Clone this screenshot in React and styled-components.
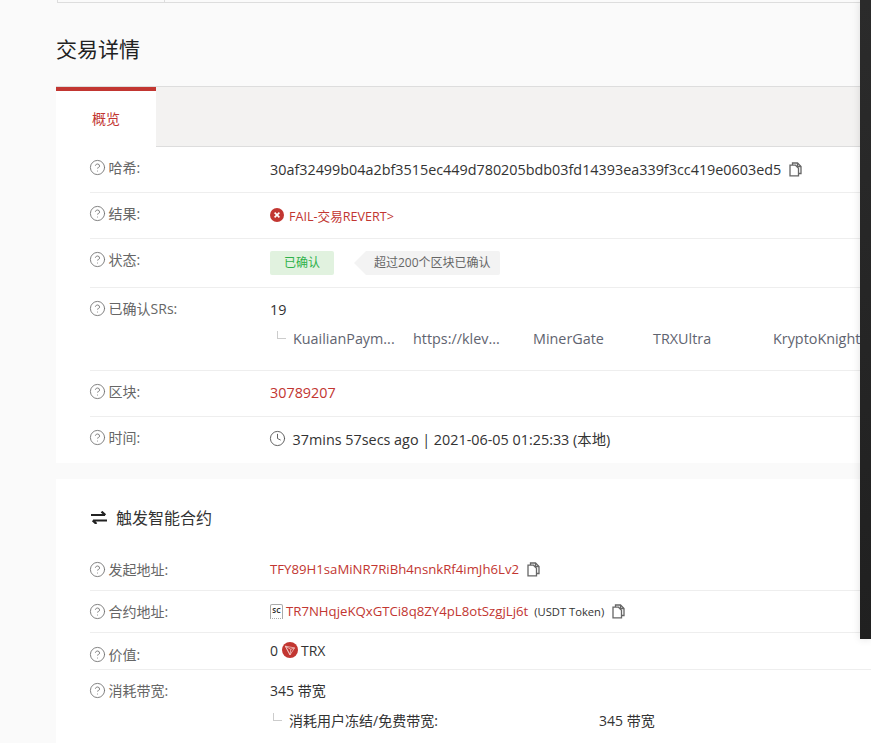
import React from 'react';
import styled, { createGlobalStyle } from 'styled-components';
import { CircleHelp, Clock } from 'lucide-react';

const GlobalStyle = createGlobalStyle`
  html, body {
    margin: 0;
    height: 743px;
    overflow: hidden;
    background: #fafafa;
    font-family: "Open Sans", "Noto Sans CJK SC", sans-serif;
    color: #333;
  }
`;

const Page = styled.div`
  height: 743px;
  overflow: hidden;
  padding-left: 56px;
`;

const ScrollEdge = styled.div`
  position: fixed;
  top: 0;
  right: 0;
  width: 11px;
  height: 639px;
  background: linear-gradient(#2b2b2b, #202020);
  box-shadow: 0 0 8px rgba(0, 0, 0, 0.12);
`;

const TopTable = styled.div`
  height: 2px;
  margin-left: 1px;
  border-bottom: 1px solid #ddd;
  border-left: 1px solid #ddd;
  display: flex;
`;

const TopCell = styled.div`
  width: 106px;
  border-right: 1px solid #ddd;
`;

const Title = styled.h1`
  margin: 0;
  height: 83px;
  padding-top: 6px;
  box-sizing: border-box;
  display: flex;
  align-items: center;
  font-size: 21px;
  font-weight: 400;
  color: #222;
`;

const TabBar = styled.div`
  height: 59px;
  background: #f3f2f1;
  border-top: 1px solid #ddd;
  border-bottom: 1px solid #ddd;
  display: flex;
`;

const Tab = styled.div`
  width: 100px;
  height: 54px;
  padding-bottom: 2px;
  margin-bottom: -1px;
  background: #fff;
  border-top: 4px solid #c23631;
  display: flex;
  align-items: center;
  justify-content: center;
  font-size: 14px;
  color: #c23631;
`;

const Panel = styled.section`
  background: #fff;
  padding-left: 34px;
  margin-bottom: ${p => p.$gap || 0}px;
`;

const Row = styled.div`
  height: ${p => p.$h}px;
  display: flex;
  border-bottom: ${p => (p.$last ? 'none' : '1px solid #eee')};
  box-sizing: border-box;
`;

const Label = styled.div`
  width: 180px;
  flex-shrink: 0;
  padding-top: ${p => p.$top || 10}px;
  display: flex;
  align-items: center;
  align-self: flex-start;
  gap: 3px;
  height: 20px;
  font-size: 14px;
  color: #666;

  svg {
    margin-left: -1.4px;
  }
`;

const Value = styled.div`
  padding-top: ${p => p.$top}px;
  display: flex;
  align-items: center;
  align-self: flex-start;
  height: 20px;
  font-size: ${p => p.$size || 14.36}px;
  color: #333;
  white-space: nowrap;
`;

const RedText = styled.span`
  color: #c23631;
  font-size: ${p => p.$size || 14.36}px;
`;

const Note = styled.span`
  margin-left: 6px;
  font-size: 11.2px;
`;

const Status = styled.div`
  display: flex;
  align-items: center;
  padding-top: 12px;
  align-self: flex-start;
  font-size: 12px;
`;

const Badge = styled.span`
  width: 64px;
  height: 24px;
  line-height: 24px;
  text-align: center;
  border-radius: 2px;
  background: #e1f2df;
  color: #2eb14a;
`;

const Tip = styled.span`
  margin-left: 20px;
  height: 24px;
  line-height: 24px;
  display: flex;
  color: #666;

  &::before {
    content: '';
    border-style: solid;
    border-width: 12px 12px 12px 0;
    border-color: transparent #f3f3f3 transparent transparent;
  }
`;

const TipBody = styled.span`
  background: #f3f3f3;
  padding: 0 0 0 8px;
  width: 126px;
  border-radius: 0 2px 2px 0;
`;

const Stack = styled.div`
  display: flex;
  flex-direction: column;
  min-width: 0;
`;

const SubRow = styled.div`
  display: flex;
  align-items: center;
  margin-top: ${p => p.$top}px;
  margin-left: ${p => p.$indent}px;
  height: 20px;
  font-size: ${p => p.$size}px;
  color: ${p => p.$color};
  white-space: nowrap;
`;

const Elbow = styled.span`
  flex-shrink: 0;
  width: 8px;
  height: 7px;
  margin: -7px 7px 0 0;
  border-left: 1px solid #ccc;
  border-bottom: 1px solid #ccc;
`;

const Sr = styled.span`
  width: 120px;
  flex-shrink: 0;
`;

const SectionHead = styled.h2`
  margin: 0;
  height: 70px;
  padding-top: 6px;
  box-sizing: border-box;
  display: flex;
  align-items: center;
  gap: 9px;
  font-size: 16px;
  font-weight: 400;
  color: #333;
`;

const BandwidthKey = styled.span`
  width: 310px;
`;

const Ticket = styled.span`
  width: 13px;
  height: 15px;
  margin-right: 3px;
  box-sizing: border-box;
  border: 1.5px solid #aaa;
  border-bottom-style: dotted;
  border-radius: 2px 2px 0 0;
  font-size: 7px;
  font-weight: 700;
  line-height: 11px;
  text-align: center;
  color: #333;
`;

const HelpIcon = () => <CircleHelp size={17} strokeWidth={1.3} color="#777" />;

const CopyIcon = () => (
  <svg width="13" height="15" viewBox="0 0 13 15" fill="none" stroke="#666" strokeWidth="1.3" style={{ marginLeft: 8 }}>
    <path d="M3.5 3V1h5l3.5 3.5V11.5H9.5" />
    <path d="M8.5 1v3.5H12" />
    <path d="M1 3.2h5.5l3 3v7.6H1z" />
  </svg>
);

const FailIcon = () => (
  <svg width="14" height="14" viewBox="0 0 14 14" style={{ marginRight: 5 }}>
    <circle cx="7" cy="7" r="7" fill="#c23631" />
    <path d="M4.6 4.6l4.8 4.8M9.4 4.6l-4.8 4.8" stroke="#fff" strokeWidth="1.6" />
  </svg>
);

const SwapIcon = () => (
  <svg width="16" height="13" viewBox="0 0 16 13" fill="none" stroke="#222" strokeWidth="2.2" style={{ marginLeft: 1 }}>
    <path d="M0 4h14M10.5 .6L14.4 4" />
    <path d="M16 9.5H2M5.5 12.9L1.6 9.5" />
  </svg>
);

const TronIcon = () => (
  <svg width="16" height="16" viewBox="0 0 16 16" fill="none" style={{ margin: '0 3px 0 4px' }}>
    <circle cx="8" cy="8" r="8" fill="#c23631" />
    <path d="M3.4 4.2l9.2 1.7-4.6 7z M3.4 4.2L8 12.9l.8-5.6zM8.8 7.3l3.8-1.4" stroke="#f6d5d2" strokeWidth="0.7" strokeLinejoin="round" />
  </svg>
);

const srs = ['KuailianPaym...', 'https://klev...', 'MinerGate', 'TRXUltra', 'KryptoKnight'];

const App = () => (
  <Page>
    <GlobalStyle />
    <TopTable>
      <TopCell />
    </TopTable>
    <Title>交易详情</Title>
    <TabBar>
      <Tab>概览</Tab>
    </TabBar>

    <Panel $gap={16}>
      <Row $h={46}>
        <Label><HelpIcon />哈希:</Label>
        <Value $top={12}>
          30af32499b04a2bf3515ec449d780205bdb03fd14393ea339f3cc419e0603ed5
          <CopyIcon />
        </Value>
      </Row>
      <Row $h={46}>
        <Label><HelpIcon />结果:</Label>
        <Value $top={12} $size={12.6}>
          <FailIcon />
          <RedText $size={12.6}>FAIL-交易REVERT&gt;</RedText>
        </Value>
      </Row>
      <Row $h={49}>
        <Label><HelpIcon />状态:</Label>
        <Status>
          <Badge>已确认</Badge>
          <Tip><TipBody>超过200个区块已确认</TipBody></Tip>
        </Status>
      </Row>
      <Row $h={83}>
        <Label><HelpIcon />已确认SRs:</Label>
        <Stack>
          <Value $top={11}>19</Value>
          <SubRow $top={9} $indent={7} $size={14.36} $color="#5f6470">
            <Elbow />
            {srs.map(name => (
              <Sr key={name}>{name}</Sr>
            ))}
          </SubRow>
        </Stack>
      </Row>
      <Row $h={46}>
        <Label><HelpIcon />区块:</Label>
        <Value $top={11}><RedText>30789207</RedText></Value>
      </Row>
      <Row $h={46} $last>
        <Label><HelpIcon />时间:</Label>
        <Value $top={11}>
          <Clock size={17} strokeWidth={1.3} color="#555" style={{ margin: '0 7px 0 -1.4px' }} />
          37mins 57secs ago | 2021-06-05 01:25:33 (本地)
        </Value>
      </Row>
    </Panel>

    <Panel>
      <SectionHead><SwapIcon />触发智能合约</SectionHead>
      <Row $h={42}>
        <Label><HelpIcon />发起地址:</Label>
        <Value $top={10}>
          <RedText $size={13.2}>TFY89H1saMiNR7RiBh4nsnkRf4imJh6Lv2</RedText>
          <CopyIcon />
        </Value>
      </Row>
      <Row $h={42}>
        <Label><HelpIcon />合约地址:</Label>
        <Value $top={10}>
          <Ticket>SC</Ticket>
          <RedText $size={13.2}>TR7NHqjeKQxGTCi8q8ZY4pL8otSzgjLj6t</RedText>
          <Note>(USDT Token)</Note>
          <CopyIcon />
        </Value>
      </Row>
      <Row $h={37}>
        <Label $top={11}><HelpIcon />价值:</Label>
        <Value $top={7} $size={14}>0<TronIcon />TRX</Value>
      </Row>
      <Row $h={74} $last>
        <Label><HelpIcon />消耗带宽:</Label>
        <Stack>
          <Value $top={10} $size={14}>345 带宽</Value>
          <SubRow $top={10} $indent={3} $size={14} $color="#333">
            <Elbow />
            <BandwidthKey>消耗用户冻结/免费带宽:</BandwidthKey>
            345 带宽
          </SubRow>
        </Stack>
      </Row>
    </Panel>
    <ScrollEdge />
  </Page>
);

export default App;
